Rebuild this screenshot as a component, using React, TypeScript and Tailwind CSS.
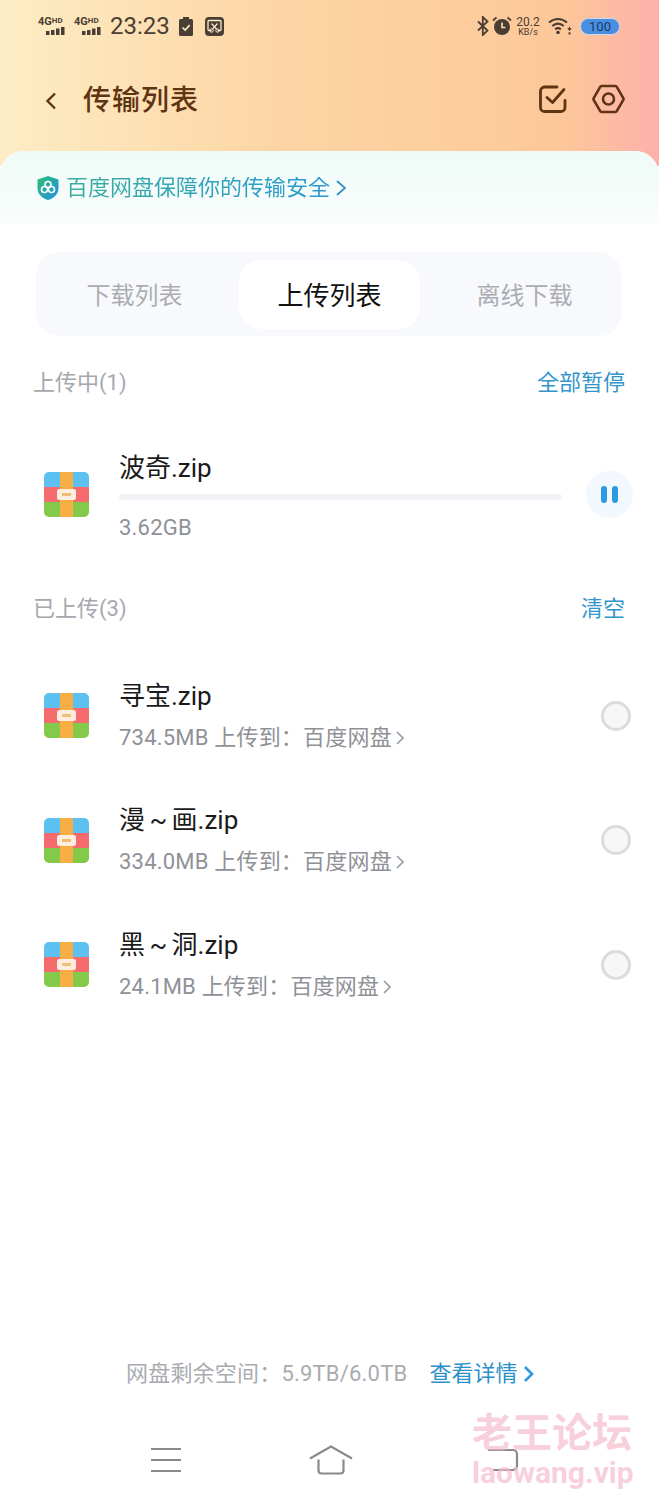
import type { ReactNode } from 'react'

const font = { fontFamily: '"Roboto", "Noto Sans CJK SC", sans-serif' }

function ZipIcon() {
  return (
    <svg width="45" height="45" viewBox="0 0 45 45" className="shrink-0">
      <defs>
        <clipPath id="zipclip">
          <rect width="45" height="45" rx="5" />
        </clipPath>
      </defs>
      <g clipPath="url(#zipclip)">
        <rect width="45" height="15" fill="#5cc0f0" />
        <rect y="15" width="45" height="15" fill="#f56b6e" />
        <rect y="30" width="45" height="15" fill="#83c94a" />
        <rect x="16" width="13" height="45" fill="#f7ae45" />
      </g>
      <rect x="13" y="17" width="19" height="11" rx="2.5" fill="#fdeee0" />
      <rect x="18" y="21" width="9" height="3" fill="#f2bd78" />
    </svg>
  )
}

function Signal() {
  return (
    <div className="relative h-[20px] w-[29px] text-[#4a3d33]">
      <span className="absolute left-0 top-[0px] whitespace-nowrap text-[11px] font-bold leading-[11px]">
        4G<span className="relative top-[-2px] text-[8px]">HD</span>
      </span>
      <svg width="29" height="8" viewBox="0 0 29 8" className="absolute left-0 bottom-[1px]">
        <rect x="8" y="4" width="3.500" height="4" fill="currentColor" />
        <rect x="13" y="3" width="3.500" height="5" fill="currentColor" />
        <rect x="18" y="1.500" width="3.500" height="6.500" fill="currentColor" />
        <rect x="23" y="0" width="3.500" height="8" fill="currentColor" />
      </svg>
    </div>
  )
}

function StatusBar() {
  return (
    <div className="flex h-[51px] items-center justify-between pl-[38px] pr-[39px] pt-[1px] text-[#4a3d33]">
      <div className="flex items-center">
        <Signal />
        <div className="ml-[7px]"><Signal /></div>
        <span className="ml-[7px] text-[24px] leading-none">23:23</span>
        <svg width="14" height="19" viewBox="0 0 14 19" className="ml-[9px]">
          <rect x="4" y="0" width="6" height="3" fill="#4a3d33" />
          <rect x="0" y="2" width="14" height="17" rx="1.500" fill="#4a3d33" />
          <path d="M3.500 10.500l2.600 2.600 4.600-5" fill="none" stroke="#fdeccb" strokeWidth="1.600" />
        </svg>
        <svg width="19" height="19" viewBox="0 0 19 19" className="ml-[12px]">
          <rect width="19" height="19" rx="4" fill="#4a3d33" />
          <path d="M6.500 13.500H4a1 1 0 0 1-1-1V4.500a1 1 0 0 1 1-1h11a1 1 0 0 1 1 1v8a1 1 0 0 1-1 1h-2.500" fill="none" stroke="#fdeccb" strokeWidth="1.300" />
          <path d="M6.500 6.500l5 5.500M12.500 6.500l-5 5.500" stroke="#fdeccb" strokeWidth="1.200" />
          <circle cx="6.500" cy="13.500" r="1.700" fill="none" stroke="#fdeccb" strokeWidth="1" />
          <circle cx="12.500" cy="13.500" r="1.700" fill="none" stroke="#fdeccb" strokeWidth="1" />
        </svg>
      </div>
      <div className="flex items-center">
        <svg width="12" height="20" viewBox="0 0 12 20">
          <path d="M1 5.500l9.500 9-4.700 4.500V1l4.700 4.500-9.500 9" fill="none" stroke="#4a3d33" strokeWidth="1.800" />
        </svg>
        <svg width="20" height="20" viewBox="0 0 20 20" className="ml-[3px]">
          <circle cx="10" cy="11" r="8" fill="#4a3d33" />
          <path d="M10 6.500V11.500h3.500" fill="none" stroke="#fdd9ac" strokeWidth="1.700" />
          <path d="M1 4.500L4.500 1.500M19 4.500L15.500 1.500" stroke="#4a3d33" strokeWidth="1.700" />
        </svg>
        <div className="ml-[4px] flex w-[24px] flex-col items-center leading-none">
          <span className="text-[12px] leading-[12px]">20.2</span>
          <span className="text-[9px] leading-[9px]">KB/s</span>
        </div>
        <svg width="24" height="18" viewBox="0 0 24 18" className="ml-[8px]">
          <path d="M1 5.500C6.500 0.800 13.500 0.800 19 5.500" fill="none" stroke="#4a3d33" strokeWidth="2.200" />
          <path d="M4.200 9C8 5.800 12 5.800 15.800 9" fill="none" stroke="#4a3d33" strokeWidth="2.200" />
          <path d="M7.200 12.300C9 10.800 11 10.800 12.800 12.300" fill="none" stroke="#4a3d33" strokeWidth="2.200" />
          <circle cx="10" cy="15.500" r="1.800" fill="#4a3d33" />
          <path d="M21.500 9.500v2.500M19.800 11.500h3.400l-1.700 2z" fill="#4a3d33" stroke="#4a3d33" strokeWidth="0.800" />
          <path d="M21.500 17.500v-2.200" stroke="#4a3d33" strokeWidth="2" />
        </svg>
        <div className="ml-[8px] flex h-[17px] w-[40px] items-center justify-center rounded-full border border-[#c9d9f0] bg-[#4a8fdf] text-[13px] leading-none text-[#173a6e]">
          100
        </div>
      </div>
    </div>
  )
}

function Header() {
  return (
    <div className="flex h-[99px] items-center justify-between pl-[44px] pr-[34px]">
      <div className="flex items-center">
        <svg width="14" height="20" viewBox="0 0 14 20">
          <path d="M11 2.500L3.500 10l7.500 7.500" fill="none" stroke="#5f3413" strokeWidth="2.400" />
        </svg>
        <span className="ml-[25px] text-[28px] font-medium leading-none tracking-[1px] text-[#5f3413]">
          传输列表
        </span>
      </div>
      <div className="mb-[3px] flex items-center gap-[24px]">
        <svg width="30" height="30" viewBox="0 0 30 30">
          <path
            d="M19 3H6.500A4 4 0 0 0 2.500 7v16.500a4 4 0 0 0 4 4H23a4 4 0 0 0 4-4V16.500"
            fill="none"
            stroke="#5f3413"
            strokeWidth="2.800"
            strokeLinecap="round"
          />
          <path d="M9 13.500l5.500 5L26 5.500" fill="none" stroke="#5f3413" strokeWidth="2.800" strokeLinecap="round" strokeLinejoin="round" />
        </svg>
        <svg width="33" height="30" viewBox="0 0 33 30">
          <path
            d="M9.500 2h14a1.500 1.500 0 0 1 1.300.8l6.500 11.400a1.500 1.500 0 0 1 0 1.600l-6.500 11.400a1.500 1.500 0 0 1-1.300.8h-14a1.500 1.500 0 0 1-1.300-.8L1.700 15.800a1.500 1.500 0 0 1 0-1.600L8.200 2.800A1.500 1.500 0 0 1 9.500 2z"
            fill="none"
            stroke="#5f3413"
            strokeWidth="2.600"
          />
          <circle cx="16.500" cy="15" r="5.500" fill="none" stroke="#5f3413" strokeWidth="2.600" />
        </svg>
      </div>
    </div>
  )
}

function Banner() {
  return (
    <div className="flex h-[73px] items-center rounded-t-[24px] bg-gradient-to-b from-[#effbf7] to-[#f9fdfd] pl-[36px]">
      <svg width="24" height="26" viewBox="0 0 24 26">
        <defs>
          <linearGradient id="shield" x1="0" y1="0" x2="1" y2="1">
            <stop offset="0" stopColor="#2fbf71" />
            <stop offset="1" stopColor="#1f8fe8" />
          </linearGradient>
        </defs>
        <path d="M12 1l10.500 3.500V13c0 6-4.500 10-10.500 12C6 23 1.500 19 1.500 13V4.500z" fill="url(#shield)" />
        <circle cx="8.500" cy="14.500" r="3" fill="none" stroke="#fff" strokeWidth="1.600" />
        <circle cx="15.500" cy="14.500" r="3" fill="none" stroke="#fff" strokeWidth="1.600" />
        <circle cx="12" cy="9.500" r="3" fill="none" stroke="#fff" strokeWidth="1.600" />
      </svg>
      <span className="ml-[6px] bg-gradient-to-r from-[#3dae9f] to-[#2a97d0] bg-clip-text text-[22px] leading-none text-transparent">
        百度网盘保障你的传输安全
      </span>
      <svg width="12" height="18" viewBox="0 0 12 18" className="ml-[5px]">
        <path d="M2 2l8 7-8 7" fill="none" stroke="#2f8fc4" strokeWidth="1.700" />
      </svg>
    </div>
  )
}

function Tabs() {
  return (
    <div className="mx-[36px] mt-[28px] flex h-[84px] w-[586px] items-center rounded-[24px] bg-[#f8f9fc] text-[24px] leading-none text-[#abadb3]">
      <div className="flex w-[197px] justify-center pt-[3px]">下载列表</div>
      <div className="ml-[6px] flex h-[69px] w-[181px] items-center justify-center rounded-[22px] bg-white pt-[3px] text-[26px] text-[#111111]">
        上传列表
      </div>
      <div className="flex w-[202px] justify-center pl-[7px] pt-[3px]">离线下载</div>
    </div>
  )
}

function SectionHead({ label, action }: { label: string; action: string }) {
  return (
    <div className="flex h-[30px] items-center justify-between pl-[33px] pr-[34px] pt-[2px]">
      <span className="text-[22px] leading-none text-[#a6a8ae]">{label}</span>
      <span className="text-[22px] leading-none text-[#3296cc]">{action}</span>
    </div>
  )
}

function FileRow({ name, children, right }: { name: string; children: ReactNode; right: ReactNode }) {
  return (
    <div className="flex h-[124.500px] items-center pl-[44px] pr-[28px]">
      <ZipIcon />
      <div className="ml-[30px] flex-1 pb-[1px]">
        <div className="text-[26px] leading-[30px] text-[#1a1a1a] [word-spacing:-2px]">{name}</div>
        {children}
      </div>
      {right}
    </div>
  )
}

function Dest({ size }: { size: string }) {
  return (
    <div className="mt-[15px] flex items-center text-[22px] leading-[24px] tracking-[0.2px] text-[#8f9197]">
      {size} 上传到：百度网盘
      <svg width="10" height="16" viewBox="0 0 10 16" className="ml-[3px]">
        <path d="M2 2l6 6-6 6" fill="none" stroke="#9a9ca2" strokeWidth="1.700" />
      </svg>
    </div>
  )
}

function Radio() {
  return <div className="h-[30px] w-[30px] shrink-0 rounded-full border-[3px] border-[#dcdcdf] bg-[#f7f7f8]" />
}

export default function App() {
  return (
    <div className="relative flex h-[1500px] w-[659px] flex-col overflow-hidden bg-white" style={font}>
      <div className="h-[166px] bg-[linear-gradient(90deg,#fdedc4_0%,#fdd6a6_40%,#fdc899_85%,#fcb0ab_100%)]">
        <StatusBar />
        <Header />
      </div>
      <div className="-mt-[15px] flex flex-1 flex-col rounded-t-[24px] bg-white">
        <Banner />
        <Tabs />
        <div className="mt-[31px]">
          <SectionHead label="上传中(1)" action="全部暂停" />
        </div>
        <div className="mt-[37.500px] flex h-[120px] items-center pl-[44px] pr-[25px]">
          <ZipIcon />
          <div className="ml-[30px] w-[443px] pt-[4px]">
            <div className="text-[26px] leading-[30px] text-[#1a1a1a]">波奇.zip</div>
            <div className="mt-[11px] h-[6px] rounded-full bg-[#f2f3f7]" />
            <div className="mt-[16px] text-[22px] leading-[24px] tracking-[0.2px] text-[#8f9197]">3.62GB</div>
          </div>
          <div className="ml-[24px] flex h-[47px] w-[47px] items-center justify-center gap-[5px] rounded-full bg-[#f2f8fd]">
            <div className="h-[17px] w-[6px] rounded-full bg-[#2a9be0]" />
            <div className="h-[17px] w-[6px] rounded-full bg-[#2a9be0]" />
          </div>
        </div>
        <div className="mt-[38.500px]">
          <SectionHead label="已上传(3)" action="清空" />
        </div>
        <div className="mt-[30.500px]">
          <FileRow name="寻宝.zip" right={<Radio />}>
            <Dest size="734.5MB" />
          </FileRow>
          <FileRow name="漫 ~ 画.zip" right={<Radio />}>
            <Dest size="334.0MB" />
          </FileRow>
          <FileRow name="黑 ~ 洞.zip" right={<Radio />}>
            <Dest size="24.1MB" />
          </FileRow>
        </div>
        <div className="flex-1" />
        <div className="flex h-[30px] items-center pl-[126px] text-[22px] leading-none tracking-[0.2px] text-[#a9abb1]">
          网盘剩余空间：5.9TB/6.0TB
          <span className="ml-[22px] tracking-normal text-[#2b8fc9]">查看详情</span>
          <svg width="12" height="18" viewBox="0 0 12 18" className="ml-[6px]">
            <path d="M2 2l7 7-7 7" fill="none" stroke="#2b9ae0" strokeWidth="2.600" />
          </svg>
        </div>
        <div className="mb-[20px] mt-[51px] flex h-[40px] items-center pl-[150px]">
          <svg width="32" height="26" viewBox="0 0 32 26">
            <path d="M1 2h30M1 13h30M1 24h30" stroke="#8a8a8c" strokeWidth="2.200" />
          </svg>
          <svg width="44" height="30" viewBox="0 0 44 30" className="ml-[127px]">
            <path d="M1 13.500L22 1.500l21 12" fill="none" stroke="#8a8a8c" strokeWidth="2.200" />
            <path d="M9.500 14.500v11a3 3 0 0 0 3 3h19a3 3 0 0 0 3-3v-11" fill="none" stroke="#8a8a8c" strokeWidth="2.200" />
          </svg>
          <svg width="32" height="24" viewBox="0 0 32 24" className="ml-[134px]">
            <path d="M1 2h25a4 4 0 0 1 4 4v12a4 4 0 0 1-4 4H6" fill="none" stroke="#8a8a8c" strokeWidth="2.200" />
          </svg>
        </div>
      </div>
      {/* watermark */}
      <div className="pointer-events-none absolute left-[472px] top-[1413px] w-[170px] font-bold leading-none text-[#f6bccb]/70">
        <div className="text-[40px] leading-[42px]">老王论坛</div>
        <div className="mt-[1px] text-[30px] leading-[34px]">laowang.vip</div>
      </div>
    </div>
  )
}
